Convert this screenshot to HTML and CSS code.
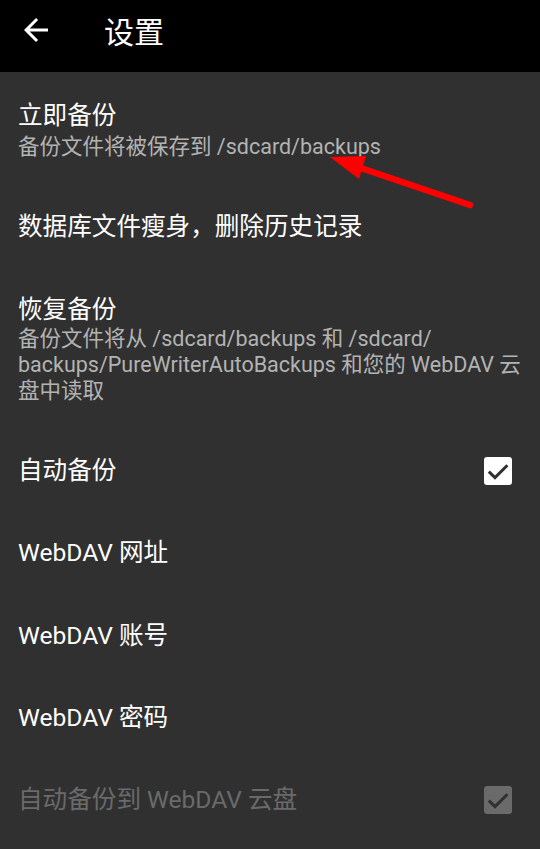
FILE: index.html
```html
<!DOCTYPE html>
<html lang="zh-CN">
<head>
<meta charset="utf-8">
<title>设置</title>
<link rel="stylesheet" href="styles.css">
</head>
<body>
<div class="app">
  <header class="toolbar">
    <svg class="back" viewBox="0 0 24 24" width="36" height="36"><path d="M20 11H7.83l5.59-5.59L12 4l-8 8 8 8 1.41-1.41L7.83 13H20v-2z" fill="#fff"/></svg>
    <h1 class="title">设置</h1>
  </header>
  <main class="list">
    <div class="row multi first">
      <div class="texts">
        <div class="name">立即备份</div>
        <div class="sub">备份文件将被保存到 /sdcard/backups</div>
      </div>
    </div>
    <div class="row single">
      <div class="name">数据库文件瘦身，删除历史记录</div>
    </div>
    <div class="row multi restore">
      <div class="texts">
        <div class="name">恢复备份</div>
        <div class="sub">备份文件将从 /sdcard/backups 和 /sdcard/<br>backups/PureWriterAutoBackups 和您的 WebDAV 云<br>盘中读取</div>
      </div>
    </div>
    <div class="row single">
      <div class="name">自动备份</div>
      <span class="check"><svg viewBox="0 0 28 28" width="28" height="28"><polyline points="4.8,14.6 11,20.6 23.4,8.2" fill="none" stroke="#303030" stroke-width="3"/></svg></span>
    </div>
    <div class="row single"><div class="name">WebDAV 网址</div></div>
    <div class="row single"><div class="name">WebDAV 账号</div></div>
    <div class="row single"><div class="name">WebDAV 密码</div></div>
    <div class="row single disabled">
      <div class="name">自动备份到 WebDAV 云盘</div>
      <span class="check off"><svg viewBox="0 0 28 28" width="28" height="28"><polyline points="4.8,14.6 11,20.6 23.4,8.2" fill="none" stroke="#303030" stroke-width="3"/></svg></span>
    </div>
  </main>
  <svg class="annot" viewBox="0 0 540 849" width="540" height="849">
    <line x1="470" y1="205" x2="352" y2="165" stroke="#ff0000" stroke-width="6.5" stroke-linecap="round"/>
    <polygon points="330,157 366,156 359,179" fill="#ff0000"/>
  </svg>
</div>
</body>
</html>
```
FILE: styles.css
```css
html, body {
  margin: 0;
  padding: 0;
  background: #303030;
}
body {
  font-family: Roboto, "Noto Sans CJK SC", sans-serif;
  color: #ffffff;
}
.app {
  position: relative;
  width: 540px;
  height: 849px;
  overflow: hidden;
  background: #303030;
}
.toolbar {
  height: 72px;
  background: #000;
  display: flex;
  align-items: center;
  box-sizing: border-box;
  padding-left: 18px;
}
.back {
  display: block;
  flex: none;
  margin-top: -12px;
}
.title {
  margin: -6px 0 0 50px;
  font-size: 30px;
  font-weight: 400;
  line-height: 36px;
  color: #fff;
}
.list {
  display: flex;
  flex-direction: column;
}
.row {
  display: flex;
  align-items: center;
  justify-content: space-between;
  padding: 0 28px 0 18px;
  box-sizing: border-box;
}
.row.single {
  height: 82.3px;
}
.row.multi {
  padding-top: 27px;
  padding-bottom: 26px;
}
.row.restore {
  padding-top: 24.5px;
  padding-bottom: 26.5px;
}
.name {
  font-size: 24.6px;
  line-height: 34px;
  color: #fff;
}
.sub {
  margin-top: 1.3px;
  font-size: 21.5px;
  line-height: 25.7px;
  color: #b3b3b3;
  white-space: nowrap;
}
.restore .sub {
  margin-top: -0.6px;
}
.check {
  width: 28px;
  height: 28px;
  border-radius: 3px;
  background: #ffffff;
  display: block;
  flex: none;
}
.check svg {
  display: block;
}
.check.off {
  background: #6a6a6a;
}
.disabled .name {
  color: #6a6a6a;
}
.annot {
  position: absolute;
  left: 0;
  top: 0;
  pointer-events: none;
}
```
